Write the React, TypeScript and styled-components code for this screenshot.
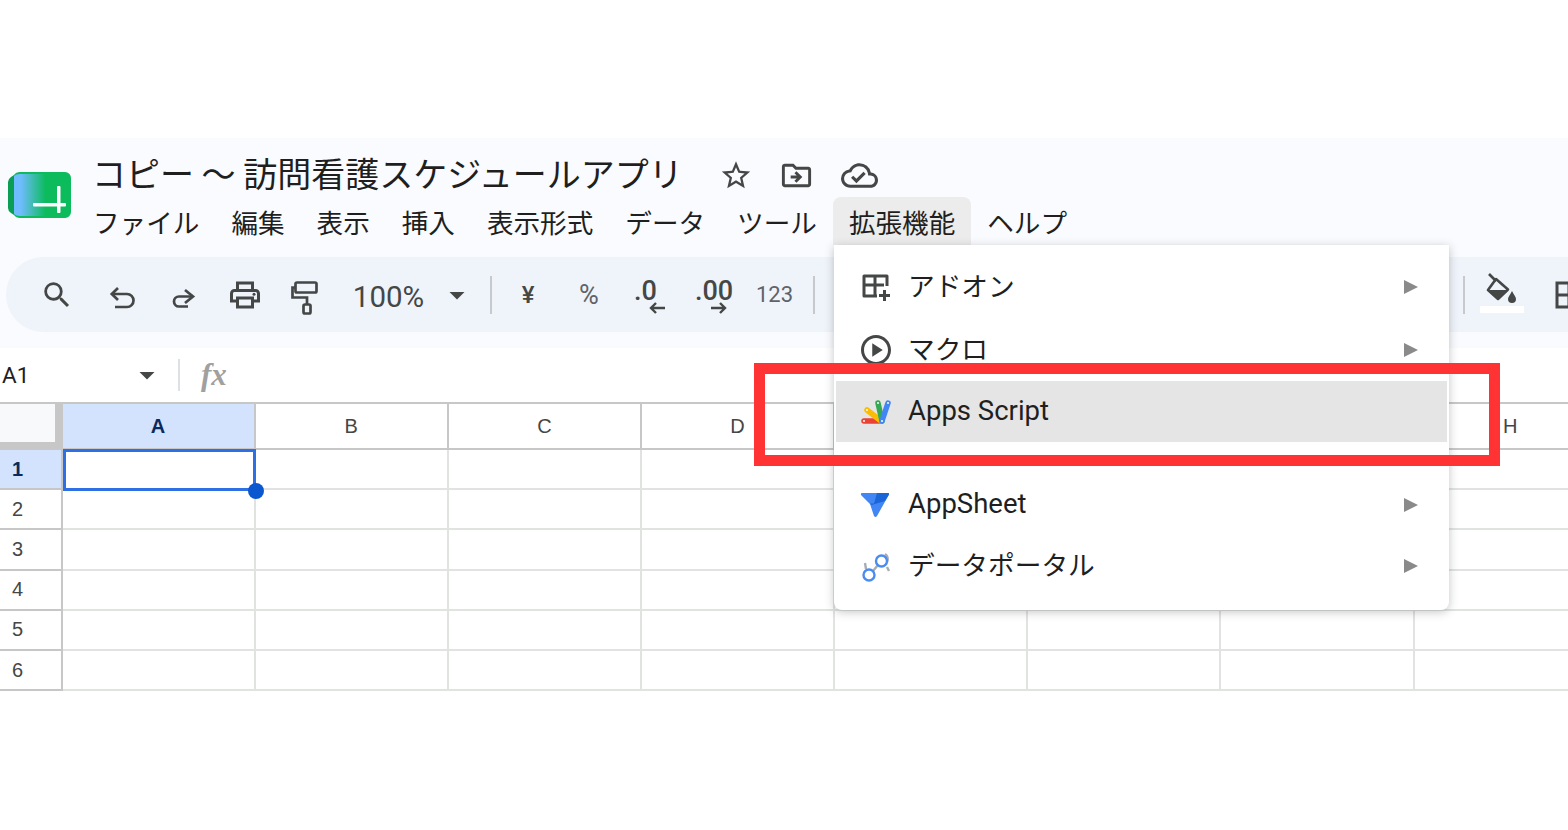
import React from "react";
import styled, { createGlobalStyle } from "styled-components";
import {
  MdArrowDropDown,
  MdOutlineBorderAll,
  MdOutlineCloudDone,
  MdOutlineDriveFileMove,
  MdOutlinePlayCircle,
  MdOutlinePrint,
  MdSearch,
  MdStarBorder,
} from "react-icons/md";

const JP = `"Noto Sans CJK JP", "Noto Sans", sans-serif`;
const LATIN = `Roboto, "Noto Sans CJK JP", sans-serif`;
const SHEET_FONT = `"Liberation Sans", Arial, sans-serif`;

const menus = ["ファイル", "編集", "表示", "挿入", "表示形式", "データ", "ツール", "拡張機能", "ヘルプ"];
const columns = ["A", "B", "C", "D", "E", "F", "G", "H"];
const rows = [1, 2, 3, 4, 5, 6];

const GlobalStyle = createGlobalStyle`
  html, body {
    margin: 0;
    padding: 0;
    background: #fff;
  }
  * {
    box-sizing: border-box;
  }
`;

const Page = styled.div`
  position: relative;
  width: 1568px;
  height: 830px;
  padding-top: 138px;
  overflow: hidden;
  background: #fff;
  font-family: ${JP};
`;

const Header = styled.header`
  height: 210px;
  background: #f9fbfe;
  overflow: hidden;
`;

const TitleArea = styled.div`
  height: 119px;
  display: flex;
  align-items: flex-start;
  padding: 34px 0 0 8px;
`;

const LogoBox = styled.div`
  width: 63px;
  height: 46px;
  flex: none;
`;

const TitleColumn = styled.div`
  margin-left: 6px;
  display: flex;
  flex-direction: column;
`;

const TitleRow = styled.div`
  height: 50px;
  display: flex;
  align-items: center;
  margin-top: -24px;
  padding-left: 15px;
  color: #444746;
`;

const Title = styled.div`
  width: 627px;
  font-size: 34px;
  line-height: 50px;
  color: #1f1f1f;
  white-space: nowrap;
`;

const TitleIcon = styled.div<{ $w: number }>`
  width: ${({ $w }) => $w}px;
  display: flex;
  justify-content: center;
  align-items: center;
  color: #444746;
  margin-top: 5px;
`;

const MenuBar = styled.nav`
  display: flex;
  height: 48px;
  margin-top: -1px;
`;

const MenuLabel = styled.div<{ $open?: boolean }>`
  padding: 0 16px;
  height: 48px;
  line-height: 50px;
  font-size: 26.6px;
  color: #1f1f1f;
  white-space: nowrap;
  border-radius: 8px 8px 0 0;
  background: ${({ $open }) => ($open ? "#ececec" : "transparent")};
`;

const Toolbar = styled.div`
  width: 1800px;
  height: 75px;
  margin-left: 6px;
  display: flex;
  align-items: center;
  border-radius: 38px;
  background: #eff3fa;
  color: #444746;
`;

const ToolButton = styled.div<{ $w: number; $ml?: number }>`
  width: ${({ $w }) => $w}px;
  margin-left: ${({ $ml }) => $ml ?? 0}px;
  flex: none;
  display: flex;
  align-items: center;
  justify-content: center;
`;

const ToolText = styled.span<{ $size: number; $color?: string; $weight?: number }>`
  font-family: ${LATIN};
  font-size: ${({ $size }) => $size}px;
  font-weight: ${({ $weight }) => $weight ?? 400};
  color: ${({ $color }) => $color ?? "#444746"};
`;

const ZoomText = styled(ToolText)`
  margin-top: 4px;
`;

const ToolSep = styled.div`
  width: 2px;
  height: 38px;
  flex: none;
  background: #c7c9cc;
`;

const DecimalIcon = styled.div`
  width: 32px;
  display: flex;
  flex-direction: column;
  font-family: ${LATIN};
  font-size: 27px;
  font-weight: 500;
  line-height: 20px;
  color: #444746;
  margin-top: 5px;
  white-space: nowrap;
  svg {
    align-self: flex-end;
    margin-top: 1px;
  }
`;

const FillIcon = styled.div`
  display: flex;
  flex-direction: column;
  align-items: center;
  margin-bottom: 4px;
`;

const FillBar = styled.div`
  width: 44px;
  height: 7px;
  margin-top: 2px;
  background: #fff;
`;

const FormulaBar = styled.div`
  height: 56px;
  display: flex;
  align-items: center;
  background: #fff;
  border-bottom: 2px solid #c7c7c7;
`;

const NameBox = styled.div`
  width: 178px;
  padding: 0 25px 0 2px;
  display: flex;
  align-items: center;
  justify-content: space-between;
  font-family: ${LATIN};
  font-size: 22.5px;
  color: #1f1f1f;
`;

const FormulaSep = styled.div`
  width: 2px;
  height: 32px;
  background: #dde1e6;
`;

const Fx = styled.span`
  margin-left: 21px;
  font-family: "Liberation Serif", serif;
  font-style: italic;
  font-weight: 700;
  font-size: 31px;
  color: #a0a0a0;
`;

const Sheet = styled.div`
  display: grid;
  grid-template-columns: 62.5px repeat(8, 193.17px);
  grid-template-rows: 46px repeat(6, 40.2px);
  width: 1610px;
`;

const Corner = styled.div`
  background: #f8f9fa;
  border-right: 8px solid #c7c7c7;
  border-bottom: 8px solid #c7c7c7;
`;

const ColHead = styled.div<{ $active?: boolean }>`
  display: flex;
  align-items: center;
  justify-content: center;
  font-family: ${SHEET_FONT};
  font-size: 20px;
  font-weight: ${({ $active }) => ($active ? 700 : 400)};
  color: ${({ $active }) => ($active ? "#0b2a5b" : "#444746")};
  background: ${({ $active }) => ($active ? "#d3e3fd" : "#fff")};
  border-right: 2px solid #c7c7c7;
  border-bottom: 2px solid #c7c7c7;
`;

const RowHead = styled.div<{ $active?: boolean }>`
  display: flex;
  align-items: center;
  padding-left: 12px;
  font-family: ${SHEET_FONT};
  font-size: 20px;
  font-weight: ${({ $active }) => ($active ? 700 : 400)};
  color: ${({ $active }) => ($active ? "#0b2a5b" : "#444746")};
  background: ${({ $active }) => ($active ? "#d3e3fd" : "#fff")};
  border-right: 2px solid #c7c7c7;
  border-bottom: 2px solid #c7c7c7;
`;

const Cell = styled.div<{ $active?: boolean }>`
  position: relative;
  border-right: 2px solid #e1e3e1;
  border-bottom: 2px solid #e1e3e1;
  ${({ $active }) =>
    $active &&
    `
    z-index: 2;
    border: 3px solid #2f6fe4;
    margin: -1px 0 -1px 0;
  `}
`;

const Handle = styled.div`
  position: absolute;
  right: -11px;
  bottom: -11px;
  width: 16px;
  height: 16px;
  border-radius: 50%;
  background: #0b57d0;
`;

const Dropdown = styled.div`
  position: absolute;
  z-index: 3;
  left: 834px;
  top: 245px;
  width: 615px;
  height: 365px;
  padding: 11px 2px 0;
  border-radius: 0 0 8px 8px;
  background: #fff;
  box-shadow: 0 2px 10px rgba(60, 64, 67, 0.3);
`;

const MenuItem = styled.div<{ $h: number; $hover?: boolean }>`
  height: ${({ $h }) => $h}px;
  padding: 0 29px 0 24px;
  display: flex;
  align-items: center;
  background: ${({ $hover }) => ($hover ? "#e5e5e5" : "transparent")};
`;

const ItemIcon = styled.div`
  width: 48px;
  height: 36px;
  flex: none;
  display: flex;
  align-items: center;
  color: #444746;
`;

const ItemLabel = styled.span<{ $latin?: boolean }>`
  flex: 1;
  padding-bottom: ${({ $latin }) => ($latin ? 2 : 4)}px;
  font-family: ${({ $latin }) => ($latin ? LATIN : JP)};
  font-size: ${({ $latin }) => ($latin ? "27.5px" : "26.7px")};
  line-height: 40px;
  color: #1f1f1f;
  white-space: nowrap;
`;

const SubArrow = styled.div`
  width: 0;
  height: 0;
  border-left: 14px solid #8a8a8a;
  border-top: 7.5px solid transparent;
  border-bottom: 7.5px solid transparent;
`;

const MenuGap = styled.div`
  height: 33px;
`;

const Highlight = styled.div`
  position: absolute;
  z-index: 4;
  left: 754px;
  top: 363px;
  width: 746px;
  height: 103px;
  border: 11px solid #ff3333;
  pointer-events: none;
`;

const LogoIcon = () => (
  <svg width="63" height="46" viewBox="0 0 63 46">
    <defs>
      <linearGradient id="logoFade" x1="0" x2="1" y1="0" y2="0">
        <stop offset="0" stopColor="#6fbcff" />
        <stop offset="0.2" stopColor="#6fbcff" />
        <stop offset="1" stopColor="#0bbb5c" />
      </linearGradient>
    </defs>
    <path d="M12 0H57a6 6 0 0 1 6 6V40a6 6 0 0 1-6 6H12Q8 46 6 43V3Q8 0 12 0Z" fill="#0bbb5c" />
    <path d="M6 3L3 5Q0 7 0 10V36Q0 39 3 41L6 43Z" fill="#0a9e54" />
    <path d="M6 4Q8 2 12 2H38V44H12Q8 44 6 42Z" fill="url(#logoFade)" />
    <rect x="25" y="31" width="33" height="3.5" fill="#fff" rx="1" />
    <rect x="49" y="14" width="3.5" height="27" fill="#fff" rx="1" />
  </svg>
);

const UndoIcon = () => (
  <svg width="40" height="40" viewBox="0 0 40 40" fill="none" stroke="#444746" strokeWidth="2.7">
    <path d="M16 13L9.800 19L16 25" />
    <path d="M10 19H25A6.500 6.500 0 0 1 25 32H13" />
  </svg>
);

const RedoIcon = () => (
  <svg width="40" height="40" viewBox="0 0 40 40" fill="none" stroke="#444746" strokeWidth="2.7">
    <path d="M22 15L30 21.500L22 28" />
    <path d="M30 21.500H16A5 5 0 0 0 16 31.500H25" />
  </svg>
);

const PaintIcon = () => (
  <svg width="32" height="40" viewBox="0 0 32 40" fill="none" stroke="#444746" strokeWidth="2.7">
    <rect x="7.500" y="7.500" width="21" height="10" rx="1.500" />
    <path d="M7 12.500H4.500V22.500H19V29" />
    <rect x="15.500" y="29.500" width="7" height="9" rx="1.500" />
  </svg>
);

const ArrowLeft = () => (
  <svg width="17" height="12" viewBox="0 0 17 12" fill="none" stroke="#444746" strokeWidth="2.4">
    <path d="M7 1L2 6L7 11M2 6H16" />
  </svg>
);

const ArrowRight = () => (
  <svg width="17" height="12" viewBox="0 0 17 12" fill="none" stroke="#444746" strokeWidth="2.4">
    <path d="M10 1L15 6L10 11M15 6H1" />
  </svg>
);

const BucketIcon = () => (
  <svg width="34" height="32" viewBox="0 0 34 32">
    <path d="M4 2L11 9" stroke="#444746" strokeWidth="2.6" />
    <path d="M11 7L23 17.500L13 27L3 18Z" fill="none" stroke="#444746" strokeWidth="2.6" strokeLinejoin="round" />
    <path d="M3 18H23L13 27Z" fill="#444746" />
    <path d="M27 19C25 23 23 25 23 27A4 4 0 0 0 31 27C31 25 29 23 27 19Z" fill="#444746" />
  </svg>
);

const AddonIcon = () => (
  <svg width="32" height="32" viewBox="0 0 32 32" fill="none" stroke="#444746" strokeWidth="3">
    <path d="M27 15V5H4V25H17" strokeLinejoin="round" />
    <path d="M4 14H24M15 5V25" />
    <path d="M24.500 19V30M19 24.500H30" />
  </svg>
);

const AppsScriptIcon = () => (
  <svg width="32" height="32" viewBox="0 0 32 32" fill="none" strokeLinecap="round" strokeWidth="5.500">
    <path d="M4 25H21" stroke="#ea4335" />
    <path d="M7 14L21 25" stroke="#fbbc04" />
    <path d="M18 7L22 25" stroke="#34a853" />
    <path d="M28 7L22 25" stroke="#4285f4" />
    <g fill="#fff" stroke="none">
      <circle cx="4" cy="25" r="1" />
      <circle cx="7" cy="14" r="1" />
      <circle cx="18" cy="7" r="1" />
      <circle cx="28" cy="7" r="1" />
      <circle cx="22" cy="25" r="1" />
    </g>
  </svg>
);

const AppSheetIcon = () => (
  <svg width="30" height="26" viewBox="0 0 30 26">
    <path d="M2 1H28Q29.500 1 29 2.500L17 24Q15.500 26 14 24L10 12L1 3Q0.500 1 2 1Z" fill="#4285f4" />
    <path d="M17 1H28Q29.500 1 29 2.500L25 9L11.500 13L10 11.500H14Z" fill="#1a66d8" />
  </svg>
);

const PortalIcon = () => (
  <svg width="32" height="32" viewBox="0 0 32 32" fill="none" strokeWidth="2.400">
    <path d="M5 13L6 19M27 17L29 21M13 21L18 15M25 4A6 6 0 0 1 27 12" stroke="#a8adb2" />
    <circle cx="21.500" cy="11" r="5.500" stroke="#4a8cf0" />
    <circle cx="9" cy="25" r="5.500" stroke="#4a8cf0" />
  </svg>
);

export default function App() {
  return (
    <Page>
      <GlobalStyle />
      <Header>
        <TitleArea>
          <LogoBox>
            <LogoIcon />
          </LogoBox>
          <TitleColumn>
            <TitleRow>
              <Title>コピー ～ 訪問看護スケジュールアプリ</Title>
              <TitleIcon $w={34}>
                <MdStarBorder size={37} />
              </TitleIcon>
              <TitleIcon $w={87}>
                <MdOutlineDriveFileMove size={35} />
              </TitleIcon>
              <TitleIcon $w={38}>
                <MdOutlineCloudDone size={37} />
              </TitleIcon>
            </TitleRow>
            <MenuBar>
              {menus.map((m) => (
                <MenuLabel key={m} $open={m === "拡張機能"}>
                  {m}
                </MenuLabel>
              ))}
            </MenuBar>
          </TitleColumn>
        </TitleArea>
        <Toolbar>
          <ToolButton $w={64} $ml={19}>
            <MdSearch size={34} />
          </ToolButton>
          <ToolButton $w={66}>
            <UndoIcon />
          </ToolButton>
          <ToolButton $w={56}>
            <RedoIcon />
          </ToolButton>
          <ToolButton $w={68}>
            <MdOutlinePrint size={36} />
          </ToolButton>
          <ToolButton $w={50}>
            <PaintIcon />
          </ToolButton>
          <ToolButton $w={75} $ml={22}>
            <ZoomText $size={29.5}>100%</ZoomText>
          </ToolButton>
          <ToolButton $w={44} $ml={9}>
            <MdArrowDropDown size={36} />
          </ToolButton>
          <ToolButton $w={11} />
          <ToolSep />
          <ToolButton $w={72}>
            <ToolText $size={24} $weight={500}>
              ¥
            </ToolText>
          </ToolButton>
          <ToolButton $w={50}>
            <ToolText $size={27} $color="#5f6368">
              %
            </ToolText>
          </ToolButton>
          <ToolButton $w={72}>
            <DecimalIcon>
              <span>.0</span>
              <ArrowLeft />
            </DecimalIcon>
          </ToolButton>
          <ToolButton $w={50}>
            <DecimalIcon>
              <span>.00</span>
              <ArrowRight />
            </DecimalIcon>
          </ToolButton>
          <ToolButton $w={77}>
            <ToolText $size={22} $color="#5f6368">
              123
            </ToolText>
          </ToolButton>
          <ToolSep />
          <ToolButton $w={648} />
          <ToolSep />
          <ToolButton $w={74}>
            <FillIcon>
              <BucketIcon />
              <FillBar />
            </FillIcon>
          </ToolButton>
          <ToolButton $w={60}>
            <MdOutlineBorderAll size={36} />
          </ToolButton>
        </Toolbar>
      </Header>
      <FormulaBar>
        <NameBox>
          <span>A1</span>
          <MdArrowDropDown size={36} color="#444746" style={{ marginRight: -12 }} />
        </NameBox>
        <FormulaSep />
        <Fx>fx</Fx>
      </FormulaBar>
      <Sheet>
        <Corner />
        {columns.map((c) => (
          <ColHead key={c} $active={c === "A"}>
            {c}
          </ColHead>
        ))}
        {rows.map((r) => (
          <React.Fragment key={r}>
            <RowHead $active={r === 1}>{r}</RowHead>
            {columns.map((c) => (
              <Cell key={c} $active={r === 1 && c === "A"}>
                {r === 1 && c === "A" && <Handle />}
              </Cell>
            ))}
          </React.Fragment>
        ))}
      </Sheet>
      <Dropdown>
        <MenuItem $h={62}>
          <ItemIcon>
            <AddonIcon />
          </ItemIcon>
          <ItemLabel>アドオン</ItemLabel>
          <SubArrow />
        </MenuItem>
        <MenuItem $h={63}>
          <ItemIcon>
            <MdOutlinePlayCircle size={36} style={{ marginLeft: -2 }} />
          </ItemIcon>
          <ItemLabel>マクロ</ItemLabel>
          <SubArrow />
        </MenuItem>
        <MenuItem $h={61} $hover>
          <ItemIcon>
            <AppsScriptIcon />
          </ItemIcon>
          <ItemLabel $latin>Apps Script</ItemLabel>
        </MenuItem>
        <MenuGap />
        <MenuItem $h={60}>
          <ItemIcon>
            <AppSheetIcon />
          </ItemIcon>
          <ItemLabel $latin>AppSheet</ItemLabel>
          <SubArrow />
        </MenuItem>
        <MenuItem $h={61}>
          <ItemIcon>
            <PortalIcon />
          </ItemIcon>
          <ItemLabel>データポータル</ItemLabel>
          <SubArrow />
        </MenuItem>
      </Dropdown>
      <Highlight />
    </Page>
  );
}
